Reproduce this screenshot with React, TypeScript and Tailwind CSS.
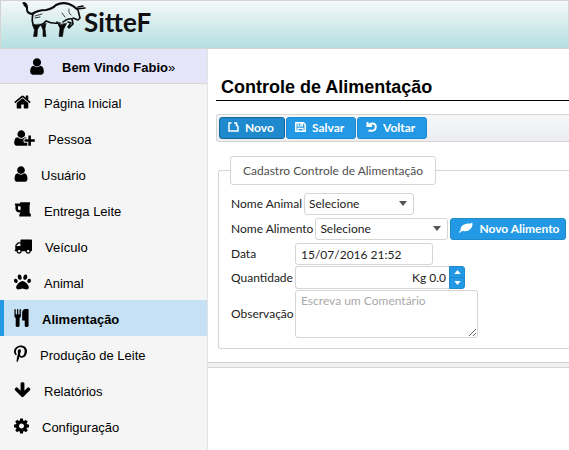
import React from "react";
import { FaPaw, FaPinterestP } from "react-icons/fa";

type Glyph = { d: string; box: string };

const glyphs: Record<string, Glyph> = {
  user: {
    box: "256 0 1280 1792",
    d: "M1536 1399q0 109-62.5 187t-150.5 78h-854q-88 0-150.5-78t-62.5-187q0-85 8.5-160.5t31.5-152 58.5-131 94-89 134.5-34.5q131 128 313 128t313-128q76 0 134.5 34.5t94 89 58.5 131 31.5 152 8.5 160.5zm-256-887q0 159-112.5 271.5t-271.5 112.5-271.5-112.5-112.5-271.5 112.5-271.5 271.5-112.5 271.5 112.5 112.5 271.5z",
  },
  home: {
    box: "64 0 1664 1792",
    d: "M1472 992v480q0 26-19 45t-45 19h-384v-384h-256v384h-384q-26 0-45-19t-19-45v-480q0-1 .5-3t.5-3l575-474 575 474q1 2 1 6zm223-69l-62 74q-8 9-21 11h-3q-13 0-21-7l-692-577-692 577q-12 8-24 7-13-2-21-11l-62-74q-8-10-7-23.5t11-21.5l719-599q32-26 76-26t76 26l244 204v-195q0-14 9-23t23-9h192q14 0 23 9t9 23v408l219 182q10 8 11 21.5t-7 23.5z",
  },
  userPlus: {
    box: "0 0 2048 1792",
    d: "M704 896q-159 0-271.5-112.5t-112.5-271.5 112.5-271.5 271.5-112.5 271.5 112.5 112.5 271.5-112.5 271.5-271.5 112.5zm960 128h352q13 0 22.5 9.5t9.5 22.5v192q0 13-9.5 22.5t-22.5 9.5h-352v352q0 13-9.5 22.5t-22.5 9.5h-192q-13 0-22.5-9.5t-9.5-22.5v-352h-352q-13 0-22.5-9.5t-9.5-22.5v-192q0-13 9.5-22.5t22.5-9.5h352v-352q0-13 9.5-22.5t22.5-9.5h192q13 0 22.5 9.5t9.5 22.5v352zm-736 224q0 52 38 90t90 38h256v238q-68 50-171 50h-874q-121 0-194-69t-73-190q0-53 3.5-103.5t14-109 26.5-108.5 43-97.5 62-81 85.5-53.5 111.5-20q19 0 39 17 79 61 154.5 91.5t164.5 30.5 164.5-30.5 154.5-91.5q20-17 39-17 132 0 217 96h-223q-52 0-90 38t-38 90v192z",
  },
  beer: {
    box: "0 0 1664 1792",
    d: "M640 896v-384h-256v256q0 53 37.500 90.500t90.500 37.500zM1664 1344v192h-1152v-192l128-192h-128q-159 0-271.500-112.500t-112.500-271.500v-320l-64-64 32-128h480l32-128h960l32 192-64 32v800z",
  },
  truck: {
    box: "0 0 1792 1792",
    d: "M640 1408q0-52-38-90t-90-38-90 38-38 90 38 90 90 38 90-38 38-90zm-384-512h384v-256h-158q-13 0-22 9l-195 195q-9 9-9 22v30zm1280 512q0-52-38-90t-90-38-90 38-38 90 38 90 90 38 90-38 38-90zm256-1088v1024q0 15-4 26.5t-13.5 18.5-16.5 11.5-23.5 6-22.5 2-25.5 0-22.5-.5q0 106-75 181t-181 75-181-75-75-181h-384q0 106-75 181t-181 75-181-75-75-181h-64q-3 0-22.5.5t-25.5 0-22.5-2-23.5-6-16.5-11.5-13.5-18.5-4-26.5q0-26 19-45t45-19v-320q0-8-.5-35t0-38 2.5-34.5 6.5-37 14-30.5 22.5-30l198-198q19-19 50.5-32t58.5-13h160v-192q0-26 19-45t45-19h1024q26 0 45 19t19 45z",
  },
  cutlery: {
    box: "192 0 1408 1792",
    d: "M832 64v640q0 61-35.5 111t-92.5 70v779q0 52-38 90t-90 38h-128q-52 0-90-38t-38-90v-779q-57-20-92.5-70t-35.5-111v-640q0-26 19-45t45-19 45 19 19 45v416q0 26 19 45t45 19 45-19 19-45v-416q0-26 19-45t45-19 45 19 19 45v416q0 26 19 45t45 19 45-19 19-45v-416q0-26 19-45t45-19 45 19 19 45zm768 0v1600q0 52-38 90t-90 38h-128q-52 0-90-38t-38-90v-512h-224q-13 0-22.5-9.5t-9.5-22.5v-800q0-132 94-226t226-94h256q26 0 45 19t19 45z",
  },
  arrowDown: {
    box: "64 0 1664 1792",
    d: "M1675 832q0 53-37 90l-651 652q-39 37-91 37-53 0-90-37l-651-652q-38-36-38-90 0-53 38-91l74-75q39-37 91-37 53 0 90 37l294 294v-704q0-52 38-90t90-38h128q52 0 90 38t38 90v704l294-294q37-37 90-37 52 0 91 37l75 75q37 39 37 91z",
  },
  cog: {
    box: "128 0 1536 1792",
    d: "M1152 896q0-106-75-181t-181-75-181 75-75 181 75 181 181 75 181-75 75-181zm512-109v222q0 12-8 23t-20 13l-185 28q-19 54-39 91 35 50 107 138 10 12 10 25t-9 23q-27 37-99 108t-94 71q-12 0-26-9l-138-108q-44 23-91 38-16 136-29 186-7 28-36 28h-222q-14 0-24.500-8.500t-11.500-21.500l-28-184q-49-16-90-37l-141 107q-10 9-25 9-14 0-25-11-126-114-165-168-7-10-7-23 0-12 8-23 15-21 51-66.500t54-70.500q-27-50-41-99l-183-27q-13-2-21-12.500t-8-23.500v-222q0-12 8-23t19-13l186-28q14-46 39-92-40-57-107-138-10-12-10-24 0-10 9-23 26-36 98.500-107.500t94.500-71.500q13 0 26 10l138 107q44-23 91-38 16-136 29-186 7-28 36-28h222q14 0 24.500 8.500t11.500 21.500l28 184q49 16 90 37l142-107q9-9 24-9 13 0 25 10 129 119 165 170 7 8 7 22 0 12-8 23-15 21-51 66.500t-54 70.500q26 50 41 98l183 28q13 2 21 12.500t8 23.500z",
  },
};

function Icon({ name, className }: { name: string; className: string }) {
  const g = glyphs[name];
  return (
    <svg viewBox={g.box} className={className} fill="currentColor" aria-hidden="true">
      <path d={g.d} />
    </svg>
  );
}

const menu = [
  { label: "Página Inicial", icon: <Icon name="home" className="h-[18px] w-[17px]" /> },
  { label: "Pessoa", icon: <Icon name="userPlus" className="h-[18px] w-[21px]" /> },
  { label: "Usuário", icon: <Icon name="user" className="h-[18px] w-[14px]" /> },
  { label: "Entrega Leite", icon: <Icon name="beer" className="h-[18px] w-[17px]" /> },
  { label: "Veículo", icon: <Icon name="truck" className="h-[18px] w-[18px]" /> },
  { label: "Animal", icon: <FaPaw className="h-[18px] w-[17px]" /> },
  { label: "Alimentação", active: true, icon: <Icon name="cutlery" className="h-[18px] w-[15px]" /> },
  { label: "Produção de Leite", icon: <FaPinterestP className="h-[18px] w-[13px]" /> },
  { label: "Relatórios", icon: <Icon name="arrowDown" className="h-[18px] w-[17px]" /> },
  { label: "Configuração", icon: <Icon name="cog" className="h-[18px] w-[15px]" /> },
];

function Logo() {
  return (
    <div className="flex items-start pl-[15px]">
      <svg viewBox="0 0 70 42" className="-mt-px -mr-[2px] h-[42px] w-[70px]" fill="none" stroke="#0a0a0a" strokeLinecap="round" strokeLinejoin="round" aria-hidden="true">
        <path d="M8 3q3 1 3 5q-1 5 5 6" strokeWidth="2" />
        <path d="M7 3l3 3M8 5l3 3" strokeWidth="1.200" />
        <path d="M16 14Q22 10 30 10Q36 9 40 5Q46 2 53 4Q58 6 61 9" strokeWidth="2.200" />
        <path d="M61 9l8-1M62 7l5-1M62 10l2 8l-2 2l-5-2" strokeWidth="1.600" />
        <path d="M17 14q-2 7 1 12M24 25q4-1 6-4q6 3 14 2M41 22q3 3 3 5" strokeWidth="1.600" />
        <path d="M16.500 25l2 5l-1 6.500h3.500l.500-7l3-5zM25 25l2 5v6.500h3l-1-8l1-5zM42.500 25l1.500 3l-1 8.500h3.500l1-7l3-6z" fill="#0a0a0a" strokeWidth=".6" />
        <path d="M47 22q5-4 9-3l1 5l-4 4M52 22l3 1l-3 4" strokeWidth="1.600" />
        <path d="M19 16l7-2M19 18l5-1M46 13l3 4M53 9q-1 4 2 6" strokeWidth=".8" />
      </svg>
      <span className="mt-px font-['Lato',sans-serif] text-[26px] font-bold leading-10 text-[#111]">SitteF</span>
    </div>
  );
}

const buttonBase =
  "flex h-[22px] shrink-0 items-center gap-[6px] rounded-[3px] border pl-2 leading-5 font-bold text-white";
const blueButton = buttonBase + " border-[#1f89ce] bg-[#2399e5]";
const pressedButton = buttonBase + " border-[#16659a] bg-[#1f89ce]";
const field = "rounded-[3px] border border-[#d5d5d5] bg-white text-xs text-[#222]";

function SelectBox({ id, className }: { id: string; className: string }) {
  return (
    <div className={"relative " + className}>
      <select id={id} className={field + " block h-[22px] w-full appearance-none pl-1"}>
        <option>Selecione</option>
      </select>
      <svg viewBox="0 0 8 5" className="pointer-events-none absolute right-[7px] top-2 h-[5px] w-2" fill="#555" aria-hidden="true">
        <path d="M0 0h8L4 5z" />
      </svg>
    </div>
  );
}

function FileIcon() {
  return (
    <svg viewBox="0 0 11 10" className="mb-[3px] h-[10px] w-[11px]" fill="none" stroke="#fff" strokeWidth="1.500" aria-hidden="true">
      <path d="M3.500 1H1v8h9V4M6 1h2.500v2.500H10" />
    </svg>
  );
}

function DiskIcon() {
  return (
    <svg viewBox="0 0 11 10" className="mb-[3px] h-[10px] w-[11px]" fill="none" stroke="#fff" aria-hidden="true">
      <path d="M.8.800h7.700l1.700 1.700v6.700H.8z" strokeWidth="1.500" />
      <path d="M3 1v3h4.500V1M3 9V6.300h5V9" strokeWidth="1.200" />
      <path d="M6 1v2.500" strokeWidth="1.500" />
    </svg>
  );
}

function UndoIcon() {
  return (
    <svg viewBox="0 0 11 10" className="mb-[3px] h-[10px] w-[11px]" fill="none" stroke="#fff" strokeWidth="2" aria-hidden="true">
      <path d="M1.500 0v4h4.500M2.500 3.500Q4.500 1.300 7 1.600Q9.800 2.200 9.800 5Q9.500 8.600 6 8.800H2.500" />
    </svg>
  );
}

function LeafIcon() {
  return (
    <svg viewBox="0 0 14 11" className="mb-1 h-[11px] w-[14px]" fill="#fff" aria-hidden="true">
      <path d="M13 0q1.500 4-1.500 7T4.500 9L2 9.500L.500 11L0 10l1.500-1.500Q1 5 4 3T10 1.500T13 0z" />
    </svg>
  );
}

export default function App() {
  return (
    <div className="flex min-h-screen flex-col overflow-hidden bg-white font-['Lato',sans-serif] text-xs text-[#222]">
      <header className="h-[49px] border border-[#d3d3d3] bg-linear-to-b from-[#f5f8f9] to-[#b4dfe1]">
        <Logo />
      </header>
      <div className="flex flex-1">
        <nav className="w-52 shrink-0 border-r border-[#e3e3e3] bg-[#f5f5f5] font-['Liberation_Sans',sans-serif] text-[13px] leading-5 text-black">
          <div className="flex h-[35px] items-center gap-[18px] border-b border-[#d8d8d8] bg-[#e5e5fa] pl-[30px] font-bold">
            <Icon name="user" className="h-[19px] w-[14px]" />
            <span className="pt-[3px]">Bem Vindo Fabio<span className="font-normal">»</span></span>
          </div>
          <ul>
            {menu.map((m) => (
              <li key={m.label}>
                <a
                  href="#"
                  className={
                    m.active
                      ? "flex h-9 items-center gap-[13px] border-l-4 border-[#2399e5] bg-[#c5e1f3] pl-[10px] font-bold"
                      : "flex h-9 items-center gap-[13px] pl-[14px]"
                  }
                >
                  {m.icon}
                  <span className="pt-[3px]">{m.label}</span>
                </a>
              </li>
            ))}
          </ul>
        </nav>
        <main className="min-w-0 flex-1">
          <h1 className="ml-2 mt-[26px] border-b border-black pb-px pl-[5px] font-['Liberation_Sans',sans-serif] text-lg font-bold leading-6 text-black">
            Controle de Alimentação
          </h1>
          <div className="ml-2 mt-[13px] flex gap-px rounded-l-[3px] border border-r-0 border-[#d5d5d5] bg-linear-to-b from-[#f6f7f9] to-[#ebedf0] py-[2px] pl-[2px]">
            <button type="button" className={pressedButton + " w-[66px]"}>
              <FileIcon />Novo
            </button>
            <button type="button" className={blueButton + " w-[70px]"}>
              <DiskIcon />Salvar
            </button>
            <button type="button" className={blueButton + " w-[70px]"}>
              <UndoIcon />Voltar
            </button>
          </div>
          <form>
            <fieldset className="ml-[10px] mt-[14px] min-w-0 rounded-l-[3px] border border-r-0 border-[#d5d5d5] pb-[10px] pl-3">
              <legend className="-ml-px h-[29px] rounded-[3px] border border-[#d5d5d5] px-3 leading-7 text-[#4f4f4f]">
                Cadastro Controle de Alimentação
              </legend>
              <div className="flex flex-col gap-[3px] pt-2">
                <div className="flex items-center gap-[2px]">
                  <label htmlFor="animal">Nome Animal</label>
                  <SelectBox id="animal" className="w-[110px]" />
                </div>
                <div className="flex items-center gap-[2px]">
                  <label htmlFor="alimento" className="whitespace-nowrap">Nome Alimento</label>
                  <SelectBox id="alimento" className="w-[133px] shrink-0" />
                  <button type="button" className={blueButton + " w-[116px] whitespace-nowrap"}>
                    <LeafIcon />Novo Alimento
                  </button>
                </div>
                <div className="grid grid-cols-[64px_1fr] items-center gap-y-px">
                  <label htmlFor="data">Data</label>
                  <input id="data" defaultValue="15/07/2016 21:52" className={field + " h-[22px] w-[138px] px-[5px]"} />
                  <label htmlFor="quantidade">Quantidade</label>
                  <div className="flex h-[23px] w-[170px]">
                    <input id="quantidade" defaultValue="Kg 0.0" className={field + " h-full min-w-0 flex-1 rounded-r-none border-r-0 px-[3px] text-right"} />
                    <div className="flex w-4 flex-col overflow-hidden rounded-r-[3px] border border-[#1f89ce] bg-[#2399e5]">
                      <button type="button" aria-label="Aumentar" className="flex flex-1 items-center justify-center border-b border-[#1f89ce]">
                        <svg viewBox="0 0 8 5" className="h-1 w-[7px]" fill="#fff" aria-hidden="true"><path d="M0 5h8L4 0z" /></svg>
                      </button>
                      <button type="button" aria-label="Diminuir" className="flex flex-1 items-center justify-center">
                        <svg viewBox="0 0 8 5" className="h-1 w-[7px]" fill="#fff" aria-hidden="true"><path d="M0 0h8L4 5z" /></svg>
                      </button>
                    </div>
                  </div>
                  <label htmlFor="observacao">Observação</label>
                  <textarea id="observacao" placeholder="Escreva um Comentário" className={field + " block h-12 w-[183px] resize px-[5px] leading-5 placeholder:text-[#aaa]"} />
                </div>
              </div>
            </fieldset>
          </form>
          <div className="mt-[13px] h-[6px] border-y border-[#d5d5d5] bg-[#eff0f2]" />
        </main>
      </div>
    </div>
  );
}
